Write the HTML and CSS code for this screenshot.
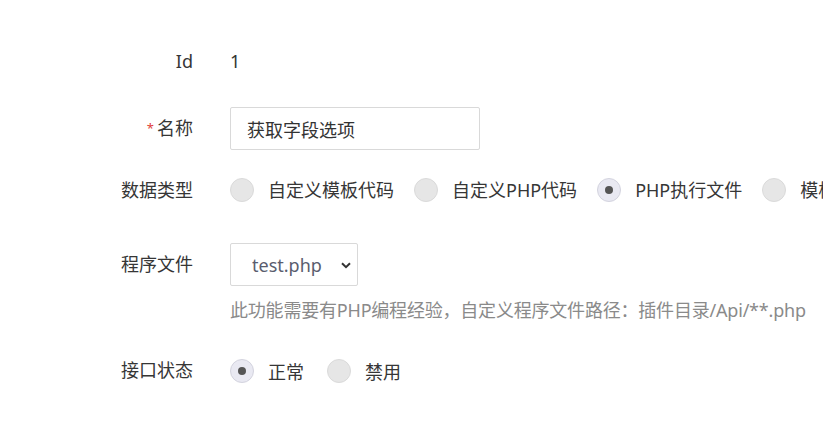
FILE: index.html
```html
<!DOCTYPE html>
<html lang="zh-CN">
<head>
<meta charset="utf-8">
<title>接口编辑</title>
<link rel="stylesheet" href="styles.css">
</head>
<body>
<form class="form">
  <div class="row row-id">
    <label class="label">Id</label>
    <div class="control"><span class="value">1</span></div>
  </div>
  <div class="row row-name">
    <label class="label"><span class="req">*</span>名称</label>
    <div class="control"><input class="input" type="text" value="获取字段选项"></div>
  </div>
  <div class="row row-type">
    <label class="label">数据类型</label>
    <div class="control radios">
      <span class="radio"><span class="dot"></span><span class="rlabel">自定义模板代码</span></span>
      <span class="radio"><span class="dot"></span><span class="rlabel">自定义PHP代码</span></span>
      <span class="radio checked"><span class="dot"></span><span class="rlabel">PHP执行文件</span></span>
      <span class="radio"><span class="dot"></span><span class="rlabel">模板执行文件</span></span>
    </div>
  </div>
  <div class="row row-file">
    <label class="label">程序文件</label>
    <div class="control">
      <div class="select-wrap">
        <select class="select"><option>test.php</option></select>
        <svg class="chev" width="10" height="7" viewBox="0 0 10 7"><path d="M1 1.2 L5 5.2 L9 1.2" fill="none" stroke="#333" stroke-width="2"/></svg>
      </div>
      <p class="help">此功能需要有PHP编程经验，自定义程序文件路径：插件目录/Api/**.php</p>
    </div>
  </div>
  <div class="row row-status">
    <label class="label">接口状态</label>
    <div class="control radios status">
      <span class="radio checked"><span class="dot"></span><span class="rlabel">正常</span></span>
      <span class="radio"><span class="dot"></span><span class="rlabel">禁用</span></span>
    </div>
  </div>
</form>
</body>
</html>
```

FILE: styles.css
```css
html, body {
  margin: 0;
  padding: 0;
  background: #fff;
  overflow: hidden;
}
body {
  font-family: "Noto Sans", "Noto Sans CJK SC", sans-serif;
  font-size: 18px;
  color: #333;
  width: 823px;
  height: 425px;
}
.form {
  padding-top: 40px;
}
.row {
  display: flex;
  align-items: flex-start;
  white-space: nowrap;
}
.label {
  width: 193px;
  flex: none;
  text-align: right;
  line-height: 43px;
  height: 43px;
  color: #363636;
}
.req {
  color: #e0403a;
  font-size: 13px;
  margin-right: 3px;
  position: relative;
  top: -2px;
}
.control {
  margin-left: 37px;
  display: flex;
  flex-direction: column;
}
.value {
  line-height: 43px;
}
.row-id { margin-bottom: 24px; }
.row-name { margin-bottom: 18px; }
.row-type { margin-bottom: 31px; }
.row-type .label, .row-type .control { height: 44px; line-height: 44px; }
.row-file { margin-bottom: 27px; }

.input {
  box-sizing: border-box;
  width: 250px;
  height: 43px;
  border: 1px solid #d9d9d9;
  border-radius: 2px;
  padding: 0 16px;
  font: inherit;
  color: #333;
  outline: none;
}

.radios {
  flex-direction: row;
  align-items: center;
  height: 43px;
}
.radio {
  display: inline-flex;
  align-items: center;
  margin-right: 20px;
}
.status .radio {
  margin-right: 23px;
}
.radio .dot {
  box-sizing: border-box;
  width: 24px;
  height: 24px;
  border-radius: 50%;
  background: #e6e6e6;
  border: 1px solid #dadada;
  margin-right: 14px;
  display: inline-flex;
  align-items: center;
  justify-content: center;
}
.radio.checked .dot {
  background: #e9e9f2;
  border-color: #d3d3de;
}
.radio.checked .dot::after {
  content: "";
  width: 8px;
  height: 8px;
  border-radius: 50%;
  background: #555;
}
.rlabel { color: #363636; }

.select-wrap {
  position: relative;
  width: 128px;
  height: 43px;
}
.select {
  appearance: none;
  -webkit-appearance: none;
  box-sizing: border-box;
  width: 128px;
  height: 43px;
  border: 1px solid #d9d9d9;
  border-radius: 2px;
  background: #fff;
  padding: 0 0 0 21px;
  font: inherit;
  color: #5a5d6e;
  outline: none;
}
.chev {
  position: absolute;
  left: 111px;
  top: 19px;
  pointer-events: none;
}
.help {
  margin: 12px 0 0;
  line-height: 24px;
  color: #8a8a8a;
  letter-spacing: -0.2px;
}
```
